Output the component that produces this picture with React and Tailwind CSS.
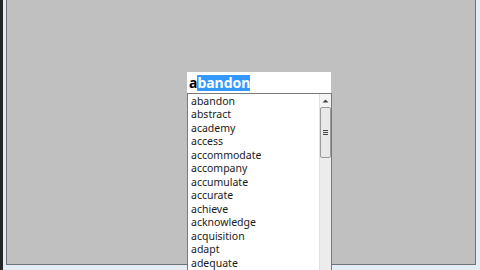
import React from "react";

const words = [
  "abandon",
  "abstract",
  "academy",
  "access",
  "accommodate",
  "accompany",
  "accumulate",
  "accurate",
  "achieve",
  "acknowledge",
  "acquisition",
  "adapt",
  "adequate",
];

export default function App() {
  return (
    <div className="relative w-[480px] h-[270px] overflow-hidden bg-[#e4ecf4] border-l-[3px] border-l-[#262626] pl-[3px] pr-[4px] pb-[5px] font-['Noto_Sans',sans-serif]">
      <div className="h-[265px] bg-[#c0c0c0] border-l border-r border-b border-[#6f7378] pt-[72px] pl-[180px]">
        <div className="relative w-[144px]">
          <div className="h-[21px] bg-white flex items-center pl-[2px] text-[14px] font-bold leading-none text-black">
            <span>a</span>
            <span className="bg-[#3399ff] text-white py-[1px]">bandon</span>
          </div>
          <div className="absolute left-0 top-[21px] w-[145px] h-[190px] bg-white border border-[#7a7a7a] flex">
            <div className="flex-1 flex flex-col pl-[3px] text-[10.5px] text-[#1a1a1a]">
              {words.map((w) => (
                <div key={w} className="h-[13.5px] flex items-center leading-none">
                  {w}
                </div>
              ))}
            </div>
            <div className="w-[12px] bg-[#ececec] border-l border-[#e0e0e0] flex flex-col">
              <div className="h-[13px] flex items-center justify-center bg-[#f4f4f4]">
                <svg width="7" height="4" viewBox="0 0 7 4">
                  <path d="M0.5 3.5 L3.5 0.5 L6.5 3.5 Z" fill="#444" />
                </svg>
              </div>
              <div className="h-[51px] bg-[#e9e9e9] border border-[#9a9a9a] rounded-[2px] flex items-center justify-center">
                <div className="flex flex-col gap-[1px]">
                  <div className="w-[5px] h-[1px] bg-[#444]" />
                  <div className="w-[5px] h-[1px] bg-[#444]" />
                  <div className="w-[5px] h-[1px] bg-[#444]" />
                </div>
              </div>
              <div className="flex-1" />
            </div>
          </div>
        </div>
      </div>
    </div>
  );
}
